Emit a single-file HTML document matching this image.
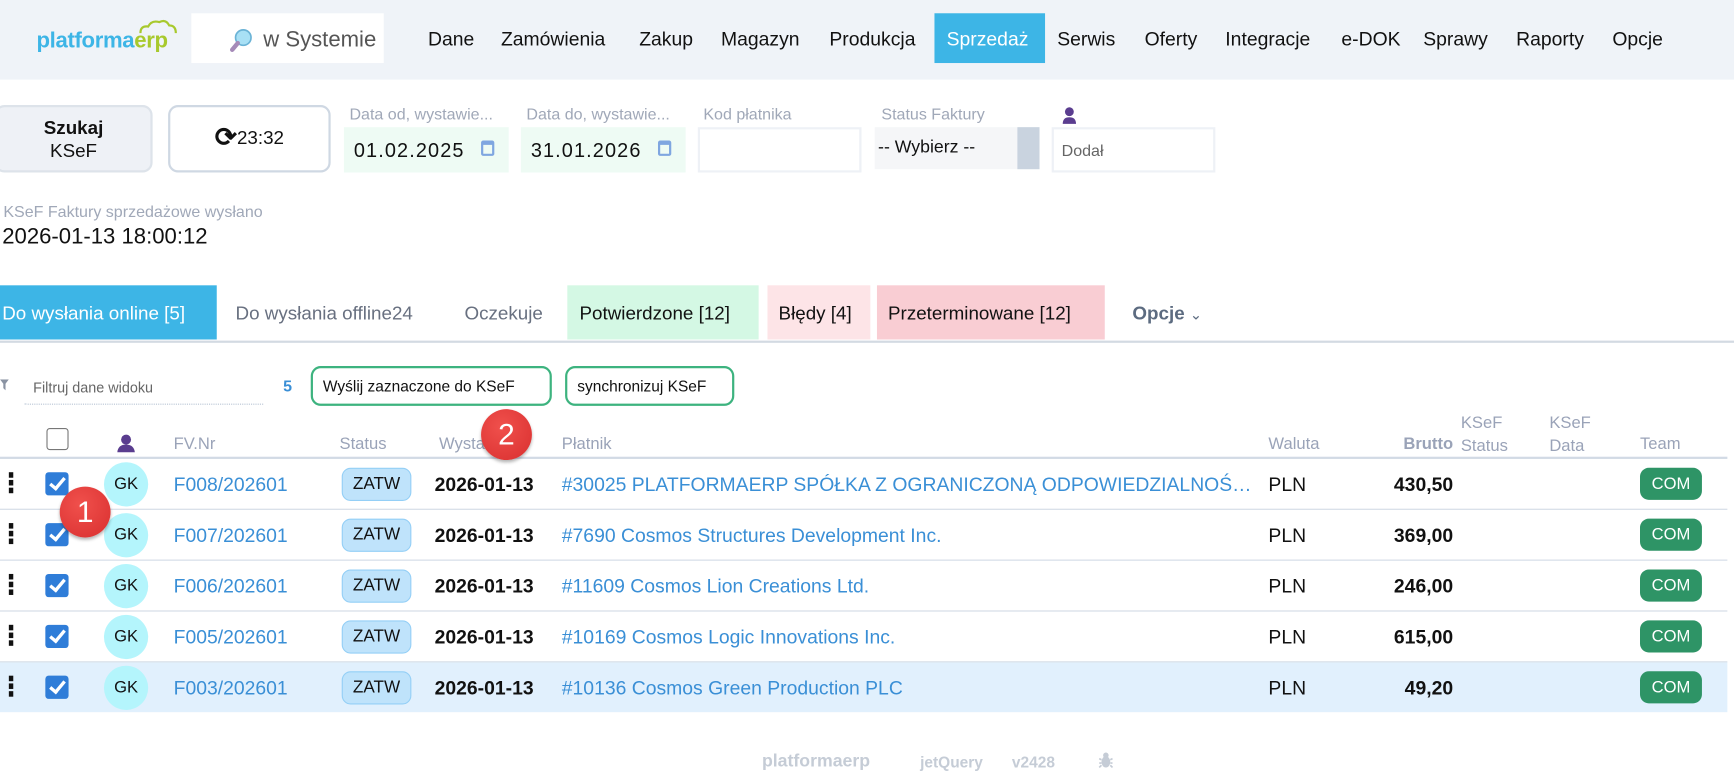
<!DOCTYPE html>
<html><head><meta charset="utf-8">
<style>
html,body{margin:0;padding:0;width:1734px;height:777px;overflow:hidden;background:#fff}
#w{position:absolute;left:0;top:0;width:1568px;height:703px;transform:scale(1.10587);transform-origin:0 0;font-family:"Liberation Sans",Arial,sans-serif;color:#111}
.a{position:absolute;white-space:nowrap}
.hdr{left:0;top:0;width:1568px;height:72px;background:#eff3f8}
.nav{top:25px;font-size:17.5px;color:#111}
.lbl{font-size:14.5px;color:#a0a8b8;top:96px}
.inp{top:115px;height:41px;box-sizing:border-box}
.dt{font-size:18px;letter-spacing:1px;top:11px;left:9px;position:absolute}
.cal{position:absolute;top:12px;width:12px;height:14px;border:2px solid #7fa6e0;border-top-width:4px;border-radius:2px;box-sizing:border-box}
.th{font-size:15px;color:#9aa3b8}
.row{left:0;width:1562px;height:45px;border-bottom:1.5px solid #d2dae5}
.dots{position:absolute;left:8px;top:12px;width:5px}
.dots i{display:block;width:4px;height:5px;background:#111;margin-bottom:2px}
.cb{position:absolute;left:41px;top:12px;width:21px;height:21px;background:#2f7dd8;border-radius:3px}
.cb:after{content:"";position:absolute;left:7px;top:2px;width:5px;height:11px;border:solid #fff;border-width:0 3px 3px 0;transform:rotate(40deg)}
.gk{position:absolute;left:94px;top:3px;width:40px;height:40px;border-radius:50%;background:#b4f5fc;font-size:15px;text-align:center;line-height:40px}
.fv{position:absolute;left:157px;top:13px;font-size:17.5px;color:#3a8fd6}
.zt{position:absolute;left:309px;top:8px;width:61px;height:28px;background:#bfe3fb;border:1px solid #94cff6;border-radius:8px;font-size:15.5px;text-align:center;line-height:28px}
.d{position:absolute;left:393px;top:13px;font-size:17.5px;font-weight:bold}
.p{position:absolute;left:508px;top:13px;font-size:17.5px;color:#3a8fd6;max-width:630px;overflow:hidden;text-overflow:ellipsis}
.pl{position:absolute;left:1147px;top:13px;font-size:17.5px}
.am{position:absolute;right:248px;top:13px;font-size:17.5px;font-weight:bold}
.com{position:absolute;left:1483px;top:8px;width:56px;height:29px;background:#2e9466;border-radius:8px;color:#fff;font-size:15px;text-align:center;line-height:29px}
.tab{top:258px;height:49px;line-height:51px;font-size:17px;padding:0 8px;box-sizing:border-box}
.btn{top:331px;height:36px;box-sizing:border-box;border:2px solid #3db37f;border-radius:9px;font-size:14px;line-height:32px;padding:0 9px}
.red{width:46px;height:46px;border-radius:50%;background:radial-gradient(circle at 40% 35%,#f0504c,#d92f2f);color:#fff;font-size:27px;text-align:center;line-height:46px;box-shadow:0 2px 3px rgba(0,0,0,.3)}
</style></head><body><div id="w">
<div class="a hdr"></div>
<div class="a" style="left:33px;top:26px;font-size:20px;font-weight:bold;letter-spacing:-0.3px"><span style="color:#3db5e6">platforma</span><span style="color:#a8c92d">erp</span></div>
<svg class="a" style="left:125px;top:17px" width="36" height="14"><path d="M2 13 Q2 6 9 7 Q12 1 19 3 Q25 0 28 6 Q34 6 34 13" fill="none" stroke="#a8c92d" stroke-width="2"/></svg>
<div class="a" style="left:173px;top:12px;width:174px;height:45px;background:#fff"></div>
<svg class="a" style="left:207px;top:25px" width="22" height="22"><circle cx="13" cy="9" r="7" fill="#a8e0f5" stroke="#6bb3d6" stroke-width="1.5"/><path d="M8 14 L3 20" stroke="#a58ab8" stroke-width="4" stroke-linecap="round"/></svg>
<div class="a" style="left:238px;top:25px;font-size:20px;color:#555">w Systemie</div>
<div class="a nav" style="left:387px">Dane</div>
<div class="a nav" style="left:453px">Zamówienia</div>
<div class="a nav" style="left:578px">Zakup</div>
<div class="a nav" style="left:652px">Magazyn</div>
<div class="a nav" style="left:750px">Produkcja</div>
<div class="a" style="left:845px;top:12px;width:100px;height:45px;background:#3db5e6"></div>
<div class="a nav" style="left:856px;color:#fff">Sprzedaż</div>
<div class="a nav" style="left:956px">Serwis</div>
<div class="a nav" style="left:1035px">Oferty</div>
<div class="a nav" style="left:1108px">Integracje</div>
<div class="a nav" style="left:1213px">e-DOK</div>
<div class="a nav" style="left:1287px">Sprawy</div>
<div class="a nav" style="left:1371px">Raporty</div>
<div class="a nav" style="left:1458px">Opcje</div>

<div class="a" style="left:-5px;top:95px;width:143px;height:61px;background:#eef1f6;border:2px solid #dde3ea;border-radius:9px;box-sizing:border-box;text-align:center;font-size:17px;line-height:21px;padding-top:8px"><b>Szukaj</b><br>KSeF</div>
<div class="a" style="left:152px;top:95px;width:147px;height:61px;background:#fff;border:2.5px solid #cfd8e3;border-radius:9px;box-sizing:border-box;text-align:center;font-size:17px;line-height:56px"><span style="font-size:24px;font-weight:bold;vertical-align:-2px">⟳</span>23:32</div>

<div class="a lbl" style="left:316px">Data od, wystawie...</div>
<div class="a inp" style="left:311px;width:149px;background:#eefbf4"><span class="dt">01.02.2025</span><span class="cal" style="left:124px"></span></div>
<div class="a lbl" style="left:476px">Data do, wystawie...</div>
<div class="a inp" style="left:471px;width:149px;background:#eefbf4"><span class="dt">31.01.2026</span><span class="cal" style="left:124px"></span></div>
<div class="a lbl" style="left:636px">Kod płatnika</div>
<div class="a inp" style="left:631px;width:148px;border:2px solid #eef1f6;background:#fff"></div>
<div class="a lbl" style="left:797px">Status Faktury</div>
<div class="a" style="left:791px;top:115px;width:149px;height:38px;background:#f5f6f8"><span style="position:absolute;left:3px;top:10px;font-size:16px">-- Wybierz --</span><span style="position:absolute;right:0;top:0;width:20px;height:38px;background:#c9d3df"></span></div>
<svg class="a" style="left:960px;top:96px" width="14" height="17"><circle cx="7" cy="5" r="4" fill="#5a3d8f"/><path d="M1 16 Q1 10 7 10 Q13 10 13 16Z" fill="#5a3d8f"/></svg>
<div class="a inp" style="left:951px;width:148px;border:2px solid #eef1f6;background:#fff"><span style="position:absolute;left:7px;top:12px;font-size:14.5px;color:#666">Dodał</span></div>

<div class="a" style="left:3px;top:184px;font-size:14.5px;color:#a0a8b8">KSeF Faktury sprzedażowe wysłano</div>
<div class="a" style="left:2px;top:203px;font-size:20px">2026-01-13 18:00:12</div>

<div class="a tab" style="left:0;width:196px;background:#3db5e6;color:#fff;padding-left:2px">Do wysłania online [5]</div>
<div class="a tab" style="left:205px;color:#687080">Do wysłania offline24</div>
<div class="a tab" style="left:412px;color:#687080">Oczekuje</div>
<div class="a tab" style="left:513px;width:173px;background:#d4f8e4;padding-left:11px">Potwierdzone [12]</div>
<div class="a tab" style="left:694px;width:93px;background:#fde4e7;padding-left:10px">Błędy [4]</div>
<div class="a tab" style="left:793px;width:206px;background:#f9cdd3;padding-left:10px">Przeterminowane [12]</div>
<div class="a tab" style="left:1016px;color:#5c6b80;font-weight:bold">Opcje <span style="font-weight:normal;font-size:13px">⌄</span></div>
<div class="a" style="left:0;top:308px;width:1568px;height:2px;background:#d3dae2"></div>

<svg class="a" style="left:0;top:343px" width="8" height="10"><path d="M0 0 H8 L5 4 V10 L3 8 V4Z" fill="#8a93a3"/></svg>
<div class="a" style="left:30px;top:343px;font-size:13px;color:#666">Filtruj dane widoku</div>
<div class="a" style="left:22px;top:365px;width:216px;border-top:1px dotted #b7c4d4"></div>
<div class="a" style="left:256px;top:342px;font-size:14.5px;color:#3a8fd6;font-weight:bold">5</div>
<div class="a btn" style="left:281px;width:218px">Wyślij zaznaczone do KSeF</div>
<div class="a btn" style="left:511px;width:153px">synchronizuj KSeF</div>

<div class="a" style="left:42px;top:387px;width:20px;height:20px;border:1.5px solid #777;border-radius:3px;box-sizing:border-box"></div>
<svg class="a" style="left:106px;top:392px" width="16" height="18"><circle cx="8" cy="5.5" r="4.5" fill="#5a3d8f"/><path d="M0 17 Q1 10 8 10 Q15 10 16 17Z" fill="#5a3d8f"/></svg>
<div class="a th" style="left:157px;top:393px">FV.Nr</div>
<div class="a th" style="left:307px;top:393px">Status</div>
<div class="a th" style="left:397px;top:393px">Wystawiono</div>
<div class="a th" style="left:508px;top:393px">Płatnik</div>
<div class="a th" style="left:1147px;top:393px">Waluta</div>
<div class="a th" style="left:1269px;top:393px;font-weight:bold">Brutto</div>
<div class="a th" style="left:1321px;top:372px;line-height:21px">KSeF<br>Status</div>
<div class="a th" style="left:1401px;top:372px;line-height:21px">KSeF<br>Data</div>
<div class="a th" style="left:1483px;top:393px">Team</div>
<div class="a" style="left:0;top:413px;width:1562px;height:1.5px;background:#d2dae5"></div>

<div class="a row" style="top:415px"><div class="dots"><i></i><i></i><i></i></div><div class="cb"></div><div class="gk">GK</div><div class="fv">F008/202601</div><div class="zt">ZATW</div><div class="d">2026-01-13</div><div class="p">#30025 PLATFORMAERP SPÓŁKA Z OGRANICZONĄ ODPOWIEDZIALNOŚCIĄ</div><div class="pl">PLN</div><div class="am">430,50</div><div class="com">COM</div></div>
<div class="a row" style="top:461px"><div class="dots"><i></i><i></i><i></i></div><div class="cb"></div><div class="gk">GK</div><div class="fv">F007/202601</div><div class="zt">ZATW</div><div class="d">2026-01-13</div><div class="p">#7690 Cosmos Structures Development Inc.</div><div class="pl">PLN</div><div class="am">369,00</div><div class="com">COM</div></div>
<div class="a row" style="top:507px"><div class="dots"><i></i><i></i><i></i></div><div class="cb"></div><div class="gk">GK</div><div class="fv">F006/202601</div><div class="zt">ZATW</div><div class="d">2026-01-13</div><div class="p">#11609 Cosmos Lion Creations Ltd.</div><div class="pl">PLN</div><div class="am">246,00</div><div class="com">COM</div></div>
<div class="a row" style="top:553px"><div class="dots"><i></i><i></i><i></i></div><div class="cb"></div><div class="gk">GK</div><div class="fv">F005/202601</div><div class="zt">ZATW</div><div class="d">2026-01-13</div><div class="p">#10169 Cosmos Logic Innovations Inc.</div><div class="pl">PLN</div><div class="am">615,00</div><div class="com">COM</div></div>
<div class="a row" style="top:599px;background:#e1f0fd;border-bottom:none"><div class="dots"><i></i><i></i><i></i></div><div class="cb"></div><div class="gk">GK</div><div class="fv">F003/202601</div><div class="zt">ZATW</div><div class="d">2026-01-13</div><div class="p">#10136 Cosmos Green Production PLC</div><div class="pl">PLN</div><div class="am">49,20</div><div class="com">COM</div></div>

<div class="a red" style="left:54px;top:440px">1</div>
<div class="a red" style="left:435px;top:370px">2</div>

<div class="a" style="left:689px;top:680px;font-size:16px;font-weight:bold;color:#c5ccd6">platformaerp</div>
<div class="a" style="left:832px;top:681px;font-size:14px;font-weight:bold;color:#c5ccd6">jetQuery</div>
<div class="a" style="left:915px;top:681px;font-size:14px;font-weight:bold;color:#c5ccd6">v2428</div>
<svg class="a" style="left:993px;top:680px" width="14" height="16"><ellipse cx="7" cy="9" rx="4" ry="5" fill="#c5ccd6"/><circle cx="7" cy="3" r="2.5" fill="#c5ccd6"/><path d="M1 6 L3 7 M1 10 H3 M1 14 L3 12 M13 6 L11 7 M13 10 H11 M13 14 L11 12" stroke="#c5ccd6" stroke-width="1.5"/></svg>
</div></body></html>
